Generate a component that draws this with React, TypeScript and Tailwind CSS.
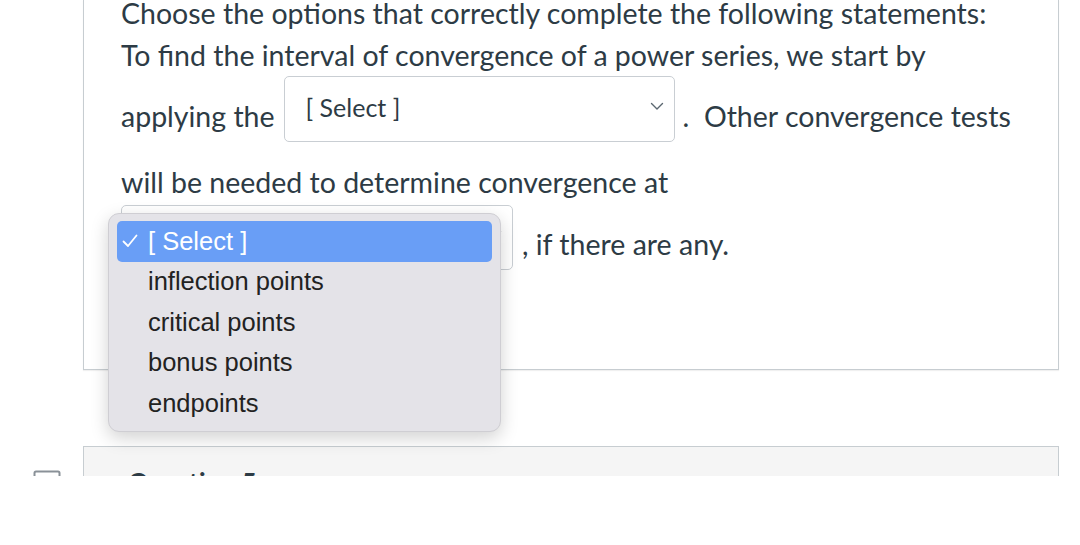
import React from "react";

function Chevron() {
  return (
    <svg width="14" height="9" viewBox="0 0 14 9" fill="none">
      <path d="M1.5 1.5 L7 7 L12.5 1.5" stroke="#5b6770" strokeWidth="1.4" strokeLinecap="round" strokeLinejoin="round" />
    </svg>
  );
}

function SelectBox({ width, height, label }: { width: number; height: number; label?: string }) {
  return (
    <div
      className="flex shrink-0 items-center justify-between rounded-[5px] border border-[#c9ced3] bg-white pl-[21px] pr-[10px]"
      style={{ width, height }}
    >
      <span className="text-[25px] text-[#2d3b45] leading-none pb-[3px]">{label}</span>
      <span className="pb-[6px]">
        <Chevron />
      </span>
    </div>
  );
}

export default function App() {
  const items = ["inflection points", "critical points", "bonus points", "endpoints"];
  return (
    <div className="w-[1080px] h-[545px] bg-white overflow-hidden" style={{ fontFamily: "Lato, 'Noto Sans', sans-serif" }}>
      <div className="relative h-[476px] overflow-hidden">
        {/* left bookmark icon */}
        <div className="absolute left-[33px] top-[470px]">
          <svg width="28" height="12" viewBox="0 0 28 12" fill="none">
            <path d="M1.5 12 V3 Q1.5 1.5 3 1.5 H25 Q26.5 1.5 26.5 3 V12" stroke="#8a9198" strokeWidth="2" />
          </svg>
        </div>

        {/* Card 1 */}
        <div className="flex flex-col ml-[83px] w-[976px] h-[370px] border-x border-b border-[#c7cdd1] bg-white shadow-[0_1px_1px_rgba(0,0,0,0.06)] pl-[37px] text-[#2d3b45] text-[28.5px]">
          <div className="-mt-[8px] leading-[42px] whitespace-nowrap">Choose the options that correctly complete the following statements:</div>
          <div className="leading-[42px] whitespace-nowrap">To find the interval of convergence of a power series, we start by</div>
          <div className="flex items-start h-[66px] whitespace-nowrap">
            <span className="mt-[19px] leading-[42px]">applying the</span>
            <div className="ml-[9px]">
              <SelectBox width={391} height={66} label="[ Select ]" />
            </div>
            <span className="mt-[19px] ml-[8px] leading-[42px]">.&nbsp; Other convergence tests</span>
          </div>
          <div className="mt-[19px] leading-[42px] whitespace-nowrap">will be needed to determine convergence at</div>
          <div className="mt-[2px] flex items-start h-[66px] whitespace-nowrap">
            <div className="relative">
              <SelectBox width={392} height={65} />
              {/* open dropdown menu */}
              <div className="absolute left-[-13px] top-[8px] z-10 w-[393px] rounded-[11px] border border-[#cfced3] bg-[#e4e3e8] px-[8px] py-[7px] shadow-[0_6px_18px_rgba(0,0,0,0.18)]" style={{ fontFamily: "'Liberation Sans', Arial, sans-serif" }}>
                <div className="flex h-[40.6px] items-center rounded-[5px] bg-[#699ef6] text-white text-[25.5px]">
                  <span className="w-[31px] pl-[5px] flex items-center">
                    <svg width="16" height="14" viewBox="0 0 16 14" fill="none">
                      <path d="M1.5 7.5 L6 12 L14.5 1.5" stroke="white" strokeWidth="1.8" strokeLinecap="round" strokeLinejoin="round" />
                    </svg>
                  </span>
                  <span className="leading-none">[ Select ]</span>
                </div>
                {items.map((it) => (
                  <div key={it} className="flex h-[40.6px] items-center pl-[31px] text-[25.5px] text-[#222222]">
                    <span className="leading-none">{it}</span>
                  </div>
                ))}
              </div>
            </div>
            <span className="mt-[18px] ml-[9px] leading-[42px]">, if there are any.</span>
          </div>
        </div>

        {/* Card 2 */}
        <div className="mt-[76px] ml-[83px] w-[976px] h-[100px] border border-[#c7cdd1] bg-[#f5f5f5] pl-[44px]">
          <div className="mt-[16px] text-[26px] font-bold text-[#2d3b45]">Question 5</div>
        </div>
      </div>
    </div>
  );
}
